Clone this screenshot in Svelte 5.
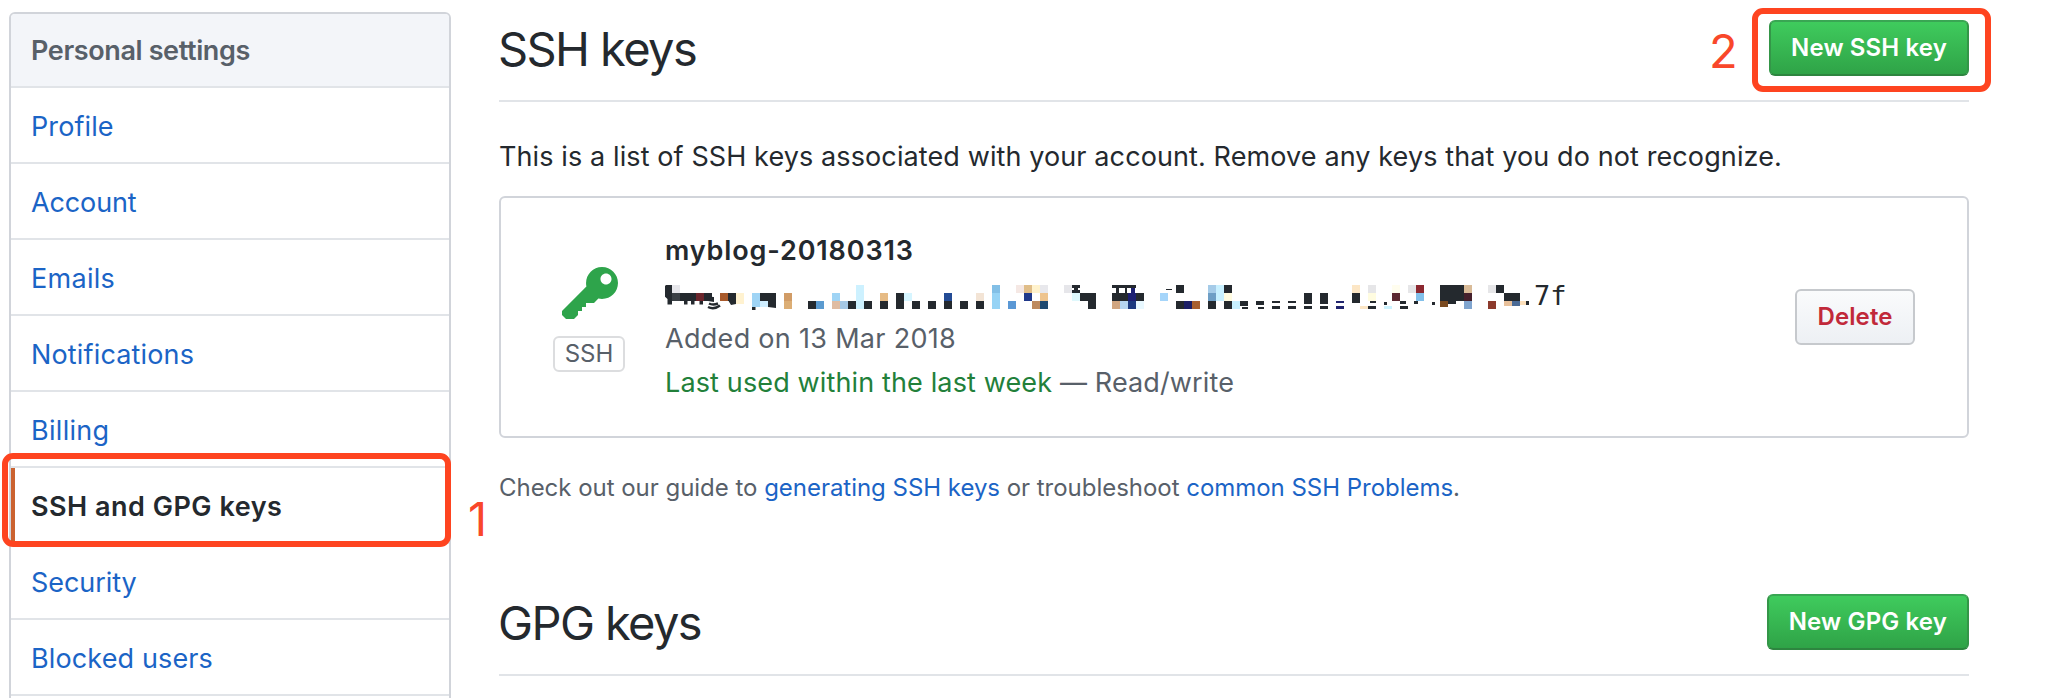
<script>
  const nav = [
    { label: 'Profile', track: 0.1 },
    { label: 'Account', track: -0.12 },
    { label: 'Emails', track: 0.3 },
    { label: 'Notifications', track: 0.16 },
    { label: 'Billing', track: 0.3 },
    { label: 'SSH and GPG keys', track: 0.5, selected: true },
    { label: 'Security', track: -0.05 },
    { label: 'Blocked users', track: 0.13 },
    { label: '', track: 0 }
  ];

  const CELL = 8;
  const K = '#24292e';
  // Censored fingerprint: [column, row, colour, columns wide, rows high]
  const cells = [
    [1, 0, '#e6e6ea'], [1, 1, '#3b4045'], [2, 1, K, 2], [4, 1, '#6b262c'], [5, 1, K],
    [7, 1, '#a85a2c'], [8, 1, K], [9, 1, '#fff2d0', 1, 1.4],
    [11, 1, '#9fd4f5', 1, 1.8], [12, 1, K, 2], [12, 2, '#cfeeff', 1, 0.7],
    [15, 1, '#d19c66'], [15, 2, '#dcae75'], [18, 2, K], [19, 2, '#5b9bd0'],
    [21, 1, '#9fd4f5'], [21, 2, '#dfbca2'], [22, 2, '#a5c8e5'], [23, 2, K],
    [24, 0, '#cdf1ff', 1, 3], [25, 2, K], [27, 1, '#e6bb85'], [27, 2, K],
    [29, 1, K, 1, 2], [30, 1, '#d6f5ff'], [31, 2, K], [33, 2, K],
    [35, 1, '#234b95'], [35, 2, K], [37, 2, K], [39, 1, '#f3e4d5'], [39, 2, K],
    [41, 0, '#82bfe6'], [41, 1, '#96d3f5', 1, 2], [43, 2, '#5a98d5'],
    [44, 0, '#f5e8e4'], [45, 0, '#e0bd88'], [46, 0, '#fff2cc'], [47, 0, '#e8e8ec'],
    [45, 1, '#20398a'], [47, 1, '#eec48e'], [46, 2, '#bd8a60'], [47, 2, '#204a70'],
    [50, 0, '#e6e6ea'], [51, 0, K, 1, 0.35], [51.3, 0.35, K, 0.5, 0.3], [51, 0.65, K, 1, 0.35],
    [51, 1, '#dff8fc'], [52, 1, K, 2], [53, 2, K],
    [56, 0, K, 3, 0.35], [56.5, 0.35, K, 0.4, 0.65], [57.6, 0.35, K, 0.3, 0.65], [58.4, 0.35, '#1c1f72', 0.5, 0.65],
    [56, 1, K, 2], [58, 1, '#1c1f72'], [59, 1, K],
    [56, 2, '#d0a580'], [57, 2, '#b5d5f0'], [58, 2, '#1c3a80'], [59, 2, '#e8f8ff'],
    [62, 1, '#a5d5fa'], [62.7, 0.5, K, 0.8, 0.15], [64, 0, K], [64, 2, K], [65, 2, '#1c1f66'], [66, 2, '#a86030'],
    [68, 0, '#a5cbe8'], [68, 1, '#6e9ec5'], [68, 2, K], [69, 0, '#c8f0ff', 1, 2],
    [70, 0, K], [70, 1, '#fffbe0'], [70, 2, K], [71, 2, '#c8f0ff'],
    [72, 2, K, 1, 0.6], [72.3, 2.75, K, 0.7, 0.25], [74, 2, K, 1, 0.55], [74.3, 2.75, K, 0.7, 0.25],
    [76, 2, K, 1, 0.3], [76, 2.6, K, 1, 0.4], [78, 2, K, 1, 0.3], [78, 2.6, K, 1, 0.4],
    [80, 1, K, 1, 1.4], [80, 2.65, K, 1, 0.35], [82, 1, K, 1, 1.4], [82, 2.65, K, 1, 0.35],
    [84, 2, '#20246e', 1, 0.3], [84, 2.6, '#20246e', 1, 0.4],
    [86, 0, '#fce6c5'], [86, 1, K, 1, 1.3], [87, 2.6, '#fce6c5', 1, 0.4],
    [88, 0, '#e6e6e8'], [88, 1, '#fffce0'], [88.2, 2, K, 0.8, 0.3], [88, 2.6, K, 1, 0.4],
    [90, 2.15, K, 0.4, 0.35], [90, 2.6, '#cdf3ff', 1, 0.4],
    [91, 0, '#fffdee'], [91, 1, '#5c2830'], [92, 2, K, 0.8, 0.35], [92, 2.6, K, 1, 0.4],
    [93, 0, '#e6e6e8'], [94, 0, '#8c2830'], [94, 1, '#82c0ea'], [93.8, 2, K, 0.4, 0.4], [96, 2.1, K, 0.4, 0.35],
    [97, 0, K, 3, 2], [97, 2, '#7a4a20', 1, 0.8], [98, 2, K, 1, 0.4],
    [100, 0, '#d9bb98'], [100, 1, '#45202c'], [100, 2, '#80a5cf'],
    [103, 0, '#e6e6e8'], [104, 0, K], [103, 2, '#8c3a2c'], [105, 1, K, 2],
    [105, 2, '#e8c09a', 1, 0.6], [106, 2, '#4a6a95', 1, 0.6], [107, 2, '#fde0bb', 1, 0.5], [107.7, 2.05, K, 0.45, 0.45]
  ];
</script>

{#snippet head(title, button)}
  <header class="subhead">
    <h2>{title}</h2>
    <button class="btn primary">{button}</button>
  </header>
{/snippet}

<div class="page">
  <nav class="menu">
    <div class="menu-title">Personal settings</div>
    {#each nav as item}
      <a class="menu-item" class:selected={item.selected} href="#top" style="letter-spacing:{item.track}px">{item.label}</a>
    {/each}
  </nav>

  <main>
    {@render head('SSH keys', 'New SSH key')}
    <p class="intro">This is a list of SSH keys associated with your account. Remove any keys that you do not recognize.</p>

    <section class="card">
      <div class="kind">
        <svg class="key" width="56" height="64" viewBox="0 0 14 16" fill="#2ea44b">
          <path fill-rule="evenodd" d="M12.83 2.17C12.08 1.42 11.14 1.03 10 1c-1.13.03-2.08.42-2.83 1.17S6.04 3.86 6.01 5c0 .3.03.59.09.89L0 12v1l1 1h2l1-1v-1h1v-1h1v-1h2l1.09-1.11c.3.08.59.11.91.11 1.14-.03 2.08-.42 2.83-1.17S13.97 6.14 14 5c-.03-1.14-.42-2.08-1.17-2.83zM11 5.38c-.77 0-1.38-.61-1.38-1.38 0-.77.61-1.38 1.38-1.38.77 0 1.38.61 1.38 1.38 0 .77-.61 1.38-1.38 1.38z" />
        </svg>
        <span class="tag">SSH</span>
      </div>
      <div class="details">
        <strong>myblog-20180313</strong>
        <svg class="hash" width="910" height="44" viewBox="0 0 910 44">
          <g transform="translate(-1 12)">
            <path fill={K} d="M0 2 2 0H8V9L50 12V17L44 16 26 16 8 14V19.500H3.500V14L0 11zM20 14h3.500v5.500H20zM27 14h3.500v5.500H27zM35.500 14H39v5.500h-3.500zM64 15h8v4l-5 1zM88 20h3.500v5H88zM104 15h8v8l-8-1z" />
            <path fill="none" stroke={K} stroke-width="2.500" d="M45 18.500q4 2 9 0M44 22q6 3 12-1.500" />
            {#each cells as [x, y, fill, w = 1, h = 1]}
              <rect x={x * CELL} y={y * CELL} width={w * CELL} height={h * CELL} {fill} />
            {/each}
            <text x="870" y="20">7f</text>
          </g>
        </svg>
        <span class="muted added">Added on 13 Mar 2018</span>
        <span class="muted"><span class="recent">Last used within the last week</span> — Read/write</span>
      </div>
      <button class="btn danger">Delete</button>
    </section>

    <p class="help">Check out our guide to <a href="#top">generating SSH keys</a> or troubleshoot <a href="#top">common SSH Problems</a>.</p>

    {@render head('GPG keys', 'New GPG key')}
  </main>

  <div class="mark mark-nav"></div>
  <span class="step step-one">1</span>
  <div class="mark mark-new"></div>
  <span class="step step-two">2</span>
</div>

<style>
  :global(body) { background: #fff; }
  * { box-sizing: border-box; }
  .page {
    position: relative;
    display: flex;
    align-items: flex-start;
    gap: 48px;
    height: 698px;
    padding-left: 9px;
    overflow: hidden;
    font: 400 27px/44px Inter, "Liberation Sans", sans-serif;
    color: #24292e;
  }
  a { color: #1b64c6; text-decoration: none; }
  p, h2 { margin: 0; }

  .menu {
    flex: none;
    width: 442px;
    margin-top: 12px;
    border: 2px solid #d1d4da;
    border-radius: 6px;
  }
  .menu-title {
    height: 74px;
    padding-left: 20px;
    border-bottom: 2px solid #e1e4e8;
    border-radius: 4px 4px 0 0;
    background: #f3f5f9;
    color: #586069;
    font-weight: 600;
    line-height: 73px;
    letter-spacing: -0.38px;
  }
  .menu-item {
    display: block;
    height: 76px;
    padding: 2px 0 0 20px;
    border-bottom: 2px solid #e1e4e8;
    line-height: 73px;
  }
  .selected {
    padding-left: 16px;
    border-left: 4px solid #cb6230;
    color: #24292e;
    font-weight: 600;
  }

  main { flex: none; width: 1470px; }
  .subhead {
    display: flex;
    justify-content: space-between;
    padding: 20px 0 24px;
    border-bottom: 2px solid #e1e4e8;
  }
  h2 {
    height: 56px;
    margin-left: -1px;
    font-size: 47px;
    font-weight: 400;
    line-height: 58px;
    letter-spacing: -1.6px;
  }
  .btn {
    height: 56px;
    padding: 0 20px 1px;
    border: 2px solid #c6c9cd;
    border-radius: 6px;
    font: 600 24px/50px Inter, "Liberation Sans", sans-serif;
    white-space: nowrap;
  }
  .primary {
    border-color: #39a653 #349648 #2d853f;
    background: linear-gradient(#3fcb5d, #2fa347);
    color: #fff;
    letter-spacing: 0.14px;
  }
  .danger {
    margin-left: auto;
    width: 120px;
    background: linear-gradient(#fafbfc, #edf0f4);
    color: #c1293a;
    letter-spacing: 0.1px;
  }
  .intro {
    margin: 34px 0 18px;
    line-height: 42px;
    letter-spacing: 0.107px;
  }
  .card {
    display: flex;
    align-items: center;
    height: 242px;
    padding: 0 52px;
    border: 2px solid #d1d4da;
    border-radius: 6px;
  }
  .kind {
    display: flex;
    flex-direction: column;
    align-items: center;
    gap: 9px;
    width: 72px;
    margin-right: 40px;
  }
  .key { margin-left: 2px; }
  .tag {
    width: 72px;
    height: 36px;
    border: 2px solid #dcdddf;
    border-radius: 6px;
    color: #586069;
    font-size: 24px;
    line-height: 32px;
    text-align: center;
  }
  .details {
    display: flex;
    flex-direction: column;
    letter-spacing: 0.135px;
  }
  strong {
    font-weight: 600;
    letter-spacing: 0.86px;
  }
  .hash { display: block; }
  .hash text { font: 27px "DejaVu Sans Mono", monospace; letter-spacing: 0; fill: #24292e; }
  .hash rect { shape-rendering: crispEdges; }
  .muted { color: #586069; }
  .added { letter-spacing: 0.3px; }
  .recent { color: #22803a; }
  .help {
    margin: 32px 0 68px;
    color: #586069;
    font-size: 24px;
    line-height: 36px;
    letter-spacing: -0.03px;
  }

  .mark {
    position: absolute;
    border: 6px solid #fe4420;
    border-radius: 11px;
  }
  .mark-nav { left: 2px; top: 453px; width: 449px; height: 94px; }
  .mark-new { left: 1752px; top: 8px; width: 239px; height: 84px; }
  .step {
    position: absolute;
    color: #f9472a;
    font-size: 47px;
    line-height: 56px;
  }
  .step-one { left: 468px; top: 491px; }
  .step-two { left: 1709px; top: 23px; }
</style>
